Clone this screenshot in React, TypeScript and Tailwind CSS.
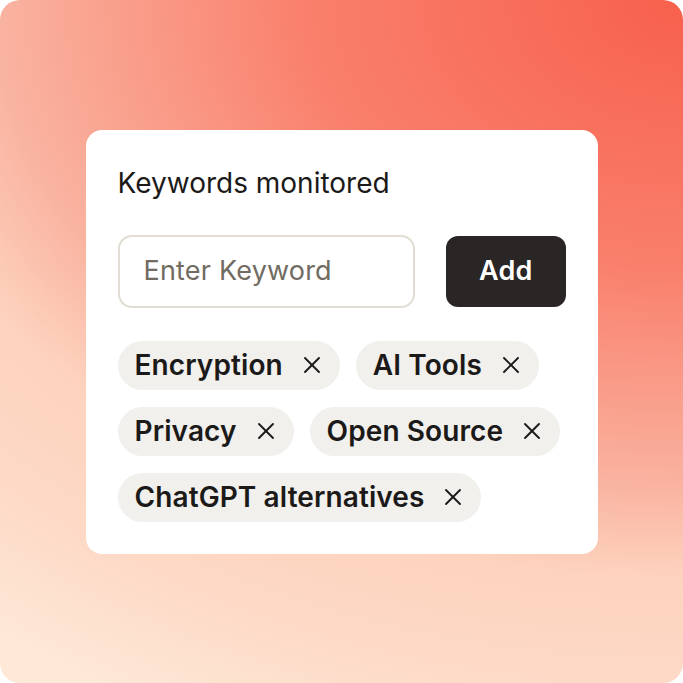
import { X } from "lucide-react";

const keywords = ["Encryption", "AI Tools", "Privacy", "Open Source", "ChatGPT alternatives"];

export default function App() {
  return (
    <div className="w-[683px] h-[683px] bg-white font-['Inter',sans-serif]">
      <div className="w-full h-full rounded-[20px] flex items-center justify-center bg-[radial-gradient(760px_540px_at_100%_0%,#f7604d_0%,#f9806c_50%,#f9b3a0_90%,#fdd3be_107%,#fdd9c6_126%,#fee9d8_150%)]">
        <div className="w-[512px] bg-white rounded-[16px] pt-[36px] pb-[32px] px-[32px]">
          <h2 className="text-[28px] leading-[34px] text-[#1c1a19]">Keywords monitored</h2>

          <div className="flex items-center gap-[31px] mt-[35px]">
            <div className="w-[299px] h-[73px] rounded-[14px] border-2 border-[#e2ddd2] flex items-center px-[24px] text-[27px] tracking-[0.2px] text-[#716b62]">
              Enter Keyword
            </div>
            <button className="w-[120px] h-[71px] rounded-[12px] bg-[#2a2625] text-white text-[27px] font-semibold tracking-[0.3px]">
              Add
            </button>
          </div>

          <div className="flex flex-wrap gap-x-[16px] gap-y-[17px] mt-[33px]">
            {keywords.map((k) => (
              <div
                key={k}
                className="h-[49px] rounded-full bg-[#f1f0ed] flex items-center pl-[17px] pr-[14px] gap-[15px]"
              >
                <span className="text-[28px] font-semibold text-[#1c1a19] tracking-[0.1px]">{k}</span>
                <X size={28} strokeWidth={1.6} className="text-[#1c1a19]" />
              </div>
            ))}
          </div>
        </div>
      </div>
    </div>
  );
}
